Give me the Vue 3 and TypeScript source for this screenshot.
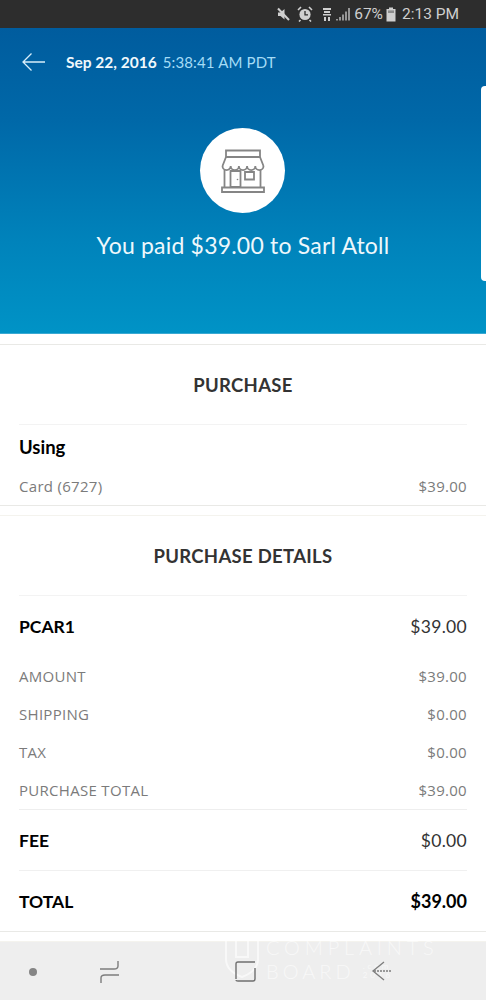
<script setup lang="ts">
interface Row {
  label: string
  value: string
}

const charges: Row[] = [
  { label: 'AMOUNT', value: '$39.00' },
  { label: 'SHIPPING', value: '$0.00' },
  { label: 'TAX', value: '$0.00' },
  { label: 'PURCHASE TOTAL', value: '$39.00' },
]
</script>

<template>
  <div class="screen">
    <!-- status bar -->
    <div class="status-bar">
      <svg class="st-icon" width="15" height="15" viewBox="0 0 15 15">
        <path d="M2 5.500h2.500L8.500 2v10.500L4.500 9H2z" fill="#cfcfcf" />
        <path d="M2 1.500l11 11.500" stroke="#cfcfcf" stroke-width="2" />
      </svg>
      <svg class="st-icon" width="16" height="16" viewBox="0 0 16 16">
        <circle cx="8" cy="8.500" r="5.600" fill="#cfcfcf" />
        <path d="M8 5v3.800h3" fill="none" stroke="#2d2d2d" stroke-width="1.300" />
        <path d="M1 4l3-3M15 4l-3-3M3.500 14l-1.500 1.500M12.500 14l1.500 1.500" stroke="#cfcfcf" stroke-width="1.600" />
      </svg>
      <svg class="st-icon lte" width="10" height="15" viewBox="0 0 10 15">
        <path d="M1 1h8v2H1zM2 4h6v2H2zM1 7h8v1.500H1z" fill="#cfcfcf" />
        <path d="M3 10v4M7 10v4" stroke="#cfcfcf" stroke-width="2" />
      </svg>
      <svg class="st-icon signal" width="15" height="14" viewBox="0 0 15 14">
        <path d="M1 12v1.500M4 10v3.500M7 7.500v6M10 4.500v9M13 1v12.500" stroke="#cfcfcf" stroke-width="1.300" />
      </svg>
      <span class="st-text pct">67%</span>
      <svg class="st-icon" width="10" height="15" viewBox="0 0 10 15">
        <path d="M3 0.500h4v1.500h2.500v12.500H.5V2H3z" fill="#cfcfcf" />
        <path d="M2 3.400h6v2.600H2z" fill="#8c8c8c" />
      </svg>
      <span class="st-text">2:13 PM</span>
    </div>

    <!-- blue header -->
    <header class="hero">
      <div class="hero-top">
        <svg class="back" width="26" height="20" viewBox="0 0 26 20">
          <path d="M24 10H2M10.500 1.500L2 10l8.500 8.500" fill="none" stroke="#d8eefa" stroke-width="1.300" />
        </svg>
        <span class="date">Sep 22, 2016</span>
        <span class="time">5:38:41 AM PDT</span>
      </div>
      <div class="avatar">
        <svg width="44" height="44" viewBox="0 0 44 44" fill="none" stroke="#858585" stroke-width="1.800">
          <path d="M5 1.500h34v6.500H5z" />
          <path d="M5 8L1.500 17M39 8l3.500 9" />
          <path d="M1.500 17a4.100 4.100 0 0 0 8.200 0a4.100 4.100 0 0 0 8.200 0a4.100 4.100 0 0 0 8.200 0a4.100 4.100 0 0 0 8.200 0a4.100 4.100 0 0 0 8.200 0" />
          <path d="M3.500 21v17M39.500 21v17" />
          <path d="M9.500 22h10v16h-10z" />
          <path d="M24 23h9v7.500h-9z" />
          <path d="M1 38.500h42V43H1z" />
          <circle cx="16.500" cy="30.500" r=".8" fill="#858585" stroke="none" />
        </svg>
      </div>
      <h1 class="hero-title">You paid $39.00 to Sarl Atoll</h1>
      <span class="side-tab"></span>
    </header>

    <main class="content">
      <section class="card purchase">
        <h2 class="card-title">PURCHASE</h2>
        <div class="using">
          <div class="strong-label">Using</div>
          <div class="row muted card-row">
            <span>Card (6727)</span>
            <span>$39.00</span>
          </div>
        </div>
      </section>

      <section class="card details">
        <h2 class="card-title">PURCHASE DETAILS</h2>
        <div class="body">
          <div class="row item-row">
            <span class="strong-label">PCAR1</span>
            <span class="item-value">$39.00</span>
          </div>
          <div class="charges">
            <div v-for="c in charges" :key="c.label" class="row muted charge-row">
              <span>{{ c.label }}</span>
              <span>{{ c.value }}</span>
            </div>
          </div>
          <div class="row fee-row">
            <span class="strong-label">FEE</span>
            <span class="item-value">$0.00</span>
          </div>
          <div class="row total-row">
            <span class="strong-label">TOTAL</span>
            <span class="strong-label total-value">$39.00</span>
          </div>
        </div>
      </section>
    </main>

    <!-- android nav bar -->
    <nav class="nav-bar">
      <div class="watermark">
        <svg width="36" height="44" viewBox="0 0 36 44" fill="none" stroke="#ffffff" stroke-opacity=".6" stroke-width="2">
          <path d="M2 0v24c0 10 8 15 16 18 8-3 16-8 16-18V0" />
          <path d="M12 0v22h12V0" />
        </svg>
        <div class="wm-text">
          <div class="wm-big">COMPLAINTS</div>
          <div class="wm-line">
            <span class="wm-big wm-board">BOARD</span>
            <span class="wm-small">.com<br />2016</span>
          </div>
        </div>
      </div>
      <span class="dot"></span>
      <svg class="recents" width="22" height="22" viewBox="0 0 22 22" fill="none" stroke="#7d7d7d" stroke-width="1.400">
        <path d="M1 8h14c3 0 4-1 4-3V0" />
        <path d="M20 14H6c-3 0-4 1-4 3v5" />
      </svg>
      <svg class="home" width="22" height="22" viewBox="0 0 22 22" fill="none" stroke="#6f6f6f" stroke-width="1.400">
        <path d="M21 2H4Q2 2 2 4v15M2 20q0 1 2 1h15q2 0 2-2V8" />
      </svg>
      <svg class="nav-back" width="22" height="22" viewBox="0 0 22 22" fill="none" stroke="#7d7d7d" stroke-width="1.300">
        <path d="M20 11H3" stroke-dasharray="2 1" />
        <path d="M13 2l-11 9 11 9" />
      </svg>
    </nav>
  </div>
</template>

<style>
html,
body {
  margin: 0;
  background: #fff;
}
</style>

<style scoped>
.screen {
  width: 486px;
  height: 1000px;
  display: flex;
  flex-direction: column;
  overflow: hidden;
  font-family: Lato, "Open Sans", sans-serif;
  background: #fff;
}

.status-bar {
  height: 28px;
  box-sizing: border-box;
  background: #2d2d2d;
  display: flex;
  align-items: center;
  justify-content: flex-end;
  padding-right: 27px;
  color: #cfcfcf;
  font-family: Roboto, sans-serif;
  font-size: 15.5px;
}

.st-icon {
  margin-right: 6px;
}
.lte {
  margin-left: 3px;
  margin-right: 4px;
}
.signal {
  margin-right: 3px;
}
.st-text {
  margin-right: 5px;
}
.st-text.pct {
  margin-right: 3px;
}
.st-text:last-child {
  margin-right: 0;
}

.hero {
  position: relative;
  height: 306px;
  flex: none;
  background: linear-gradient(180deg, #005c9e 0%, #0068a8 30%, #0083bb 70%, #0093c6 100%);
  border-bottom: 1px solid #3aa9d2;
  box-sizing: border-box;
  display: flex;
  flex-direction: column;
  align-items: center;
}

.hero-top {
  align-self: stretch;
  display: flex;
  align-items: center;
  height: 20px;
  margin-top: 24px;
  padding-left: 21px;
  color: #a5dcf6;
  font-size: 15px;
}

.back {
  margin-right: 19px;
}
.date {
  color: #f0f8fc;
  font-size: 15.500px;
  font-weight: 700;
  margin-right: 6px;
}
.time {
  letter-spacing: 0.15px;
}

.avatar {
  width: 85px;
  height: 85px;
  margin-top: 56px;
  margin-right: 1px;
  border-radius: 50%;
  background: #fff;
  display: flex;
  align-items: center;
  justify-content: center;
}

.hero-title {
  margin: 18px 0 0;
  font-size: 23px;
  font-weight: 400;
  line-height: 28px;
  color: #eef8fc;
  letter-spacing: 0.2px;
}

.side-tab {
  position: absolute;
  right: 0;
  top: 58px;
  width: 5px;
  height: 195px;
  background: #fff;
  border-radius: 4px 0 0 4px;
}

.content {
  flex: 1;
  padding-top: 10px;
  display: flex;
  flex-direction: column;
  gap: 9px;
  border-bottom: 1px solid #f4f3ee;
}

.card {
  border-top: 1px solid #e9e9e6;
  border-bottom: 1px solid #e9e9e6;
}

.details {
  border-top-color: #f4f3ee;
}

.card-title {
  margin: 0 19px;
  height: 80px;
  box-sizing: border-box;
  display: flex;
  align-items: center;
  justify-content: center;
  font-size: 18.500px;
  font-weight: 700;
  letter-spacing: 0.3px;
  color: #333;
  border-bottom: 1px solid #f3f3f3;
}

.row {
  display: flex;
  justify-content: space-between;
  align-items: center;
}

.strong-label {
  font-size: 17.500px;
  font-weight: 700;
  color: #000;
}

.total-value {
  font-size: 18px;
}

.muted {
  font-family: "Open Sans", sans-serif;
  font-size: 15px;
  color: #7b7b7b;
  letter-spacing: 0.3px;
}

.using {
  padding: 9px 19px 0;
}
.using .strong-label {
  font-size: 18.500px;
  line-height: 26px;
}
.card-row {
  height: 22px;
  margin-top: 15px;
  margin-bottom: 8px;
}

.body {
  padding: 0 19px;
}

.item-row {
  height: 61px;
}
.item-value {
  font-size: 17.500px;
  color: #333;
  letter-spacing: 0.3px;
}

.charges {
  border-bottom: 1px solid #eeeeee;
}
.charge-row {
  height: 38px;
}

.fee-row {
  height: 60px;
  border-bottom: 1px solid #f0f0f0;
}
.total-row {
  height: 60px;
}

.nav-bar {
  position: relative;
  height: 58px;
  flex: none;
  background: #eeeeee;
}

.dot,
.recents,
.home,
.nav-back {
  position: absolute;
}

.dot {
  left: 29px;
  top: 26px;
  width: 8px;
  height: 8px;
  border-radius: 50%;
  background: #858585;
}
.recents {
  left: 99px;
  top: 19px;
}
.home {
  left: 234px;
  top: 18px;
}
.nav-back {
  left: 371px;
  top: 18px;
}

/* white watermark burnt into the screenshot, lies over the list and the nav bar */
.watermark {
  position: absolute;
  left: 224px;
  top: -7px;
  display: flex;
  gap: 6px;
  color: rgba(255, 255, 255, 0.6);
  pointer-events: none;
}
.wm-big {
  font-size: 20px;
  line-height: 24px;
  letter-spacing: 4.800px;
  font-weight: 300;
}
.wm-board {
  letter-spacing: 4px;
}
.wm-line {
  display: flex;
  align-items: center;
  gap: 8px;
}
.wm-small {
  font-size: 8px;
  line-height: 9px;
  letter-spacing: 3px;
}
</style>
